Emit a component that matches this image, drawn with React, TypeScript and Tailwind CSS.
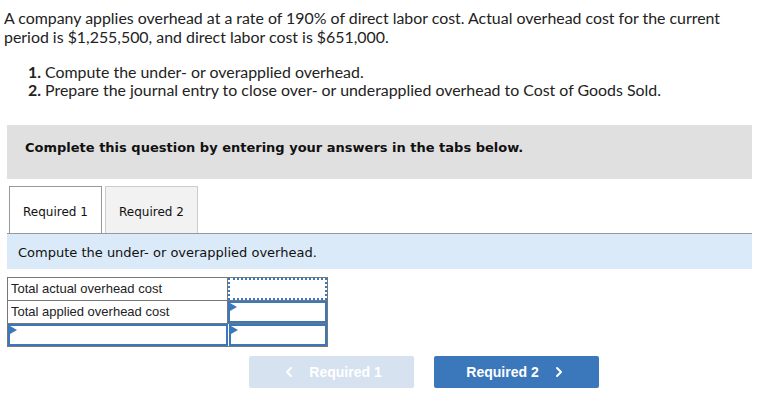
import { ChevronLeft, ChevronRight } from "lucide-react";

function Marker() {
  return (
    <span className="absolute left-0 top-0 w-0 h-0 border-t-[4px] border-b-[4px] border-l-[7px] border-t-transparent border-b-transparent border-l-[#3a77bb]" />
  );
}

export default function App() {
  return (
    <div className="w-[762px] h-[414px] bg-white text-[#222] overflow-hidden">
      <div className="pl-[4px] pr-2 pt-[8px] font-['Lato',sans-serif] text-[15.9px] leading-[19px]">
        <p>
          A company applies overhead at a rate of 190% of direct labor cost. Actual overhead cost for the current
          <br />
          period is $1,255,500, and direct labor cost is $651,000.
        </p>
        <ol className="mt-[17px] ml-[24px] leading-[18px]">
          <li>
            <span className="font-bold">1.</span> Compute the under- or overapplied overhead.
          </li>
          <li>
            <span className="font-bold">2.</span> Prepare the journal entry to close over- or underapplied overhead to Cost of Goods Sold.
          </li>
        </ol>
      </div>

      <div className="ml-[7px] mt-[26px] w-[745px] h-[54px] bg-[#e0e0e0] pt-[13px] px-[18px] font-['DejaVu_Sans',Verdana,sans-serif] text-[13px] font-bold text-[#111]">
        Complete this question by entering your answers in the tabs below.
      </div>

      <div className="ml-[7px] mt-[7px] w-[745px] flex gap-[3px] pl-[2px] border-b border-[#999] font-['DejaVu_Sans',Verdana,sans-serif] text-[12px] text-[#111]">
        <div className="w-[93px] h-[47px] border border-b-0 border-[#999] bg-white flex items-center justify-center pt-[3px] -mb-px">
          Required 1
        </div>
        <div className="w-[93px] h-[47px] border border-b-0 border-[#ccc] bg-[#f2f2f2] flex items-center justify-center pt-[3px]">
          Required 2
        </div>
      </div>

      <div className="ml-[7px] w-[745px] h-[35px] bg-[#dbeaf8] flex items-center pl-[11px] pt-[2px] font-['DejaVu_Sans',Verdana,sans-serif] text-[13px] text-[#111]">
        Compute the under- or overapplied overhead.
      </div>

      <div className="ml-[7px] mt-[8px] w-[321px] border border-[#777] font-['Liberation_Sans',Arial,sans-serif] text-[13px] text-[#222]">
        <div className="flex h-[23px] border-b border-[#777]">
          <div className="w-[220px] border-r border-[#777] pl-[3px] flex items-center">Total actual overhead cost</div>
          <div className="flex-1 border-2 border-dotted border-[#3a77bb]" />
        </div>
        <div className="flex h-[23px] border-b border-[#777]">
          <div className="w-[220px] border-r border-[#777] pl-[3px] flex items-center">Total applied overhead cost</div>
          <div className="relative flex-1 border-2 border-[#3a77bb]">
            <Marker />
          </div>
        </div>
        <div className="flex h-[22px]">
          <div className="relative w-[220px] border-2 border-[#3a77bb] mr-px">
            <Marker />
          </div>
          <div className="relative flex-1 border-2 border-[#3a77bb]">
            <Marker />
          </div>
        </div>
      </div>

      <div className="mt-[9px] flex gap-[20px] pl-[249px] font-['Liberation_Sans',Arial,sans-serif] text-[14px] font-bold text-white">
        <div className="w-[165px] h-[32px] rounded-[2px] bg-[#d6e2f0] flex items-center justify-center gap-[12px]">
          <ChevronLeft size={16} strokeWidth={3} />
          <span>Required 1</span>
        </div>
        <div className="w-[165px] h-[32px] rounded-[2px] bg-[#3a77bb] flex items-center justify-center gap-[12px]">
          <span>Required 2</span>
          <ChevronRight size={16} strokeWidth={3} />
        </div>
      </div>
    </div>
  );
}
